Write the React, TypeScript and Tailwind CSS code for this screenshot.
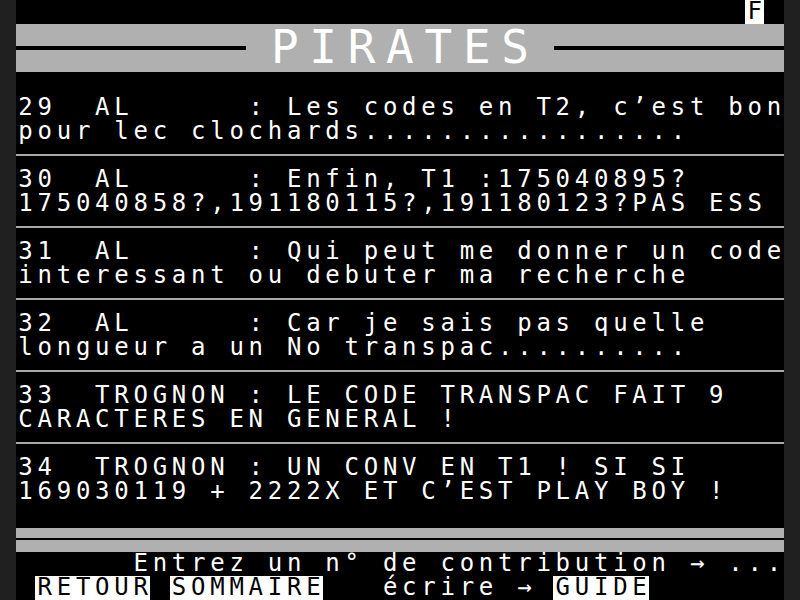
import clsx from 'clsx';

// Minitel page: 40 columns x 25 rows, 19.2 x 24 px per cell
type Seg = { text: string; inv?: boolean };

const messages = [
    { n: '29', who: 'AL', l1: 'Les codes en T2, c’est bon', l2: 'pour lec clochards.................' },
    { n: '30', who: 'AL', l1: 'Enfin, T1 :175040895?', l2: '175040858?,191180115?,191180123?PAS ESS' },
    { n: '31', who: 'AL', l1: 'Qui peut me donner un code', l2: 'interessant ou debuter ma recherche' },
    { n: '32', who: 'AL', l1: 'Car je sais pas quelle', l2: 'longueur a un No transpac..........' },
    { n: '33', who: 'TROGNON', l1: 'LE CODE TRANSPAC FAIT 9', l2: 'CARACTERES EN GENERAL !' },
    { n: '34', who: 'TROGNON', l1: 'UN CONV EN T1 ! SI SI', l2: '169030119 + 2222X ET C’EST PLAY BOY !' },
];

function TextRow({ segs }: { segs: Seg[] }) {
    const cells = segs.flatMap((s) => Array.from(s.text).map((ch) => ({ ch, inv: !!s.inv })));
    while (cells.length < 40) cells.push({ ch: ' ', inv: false });

    return (
        <div className="flex h-6">
            {cells.map((c, i) => (
                <span
                    key={i}
                    className={clsx(
                        'block h-6 w-[19.2px] shrink-0 text-center leading-[22px] whitespace-pre',
                        c.inv ? 'bg-white text-black' : 'text-white'
                    )}
                >
                    {c.ch}
                </span>
            ))}
        </div>
    );
}

function Separator() {
    return (
        <div className="h-6 pt-[10px]">
            <div className="h-[2px] bg-[#a8a8a8]"></div>
        </div>
    );
}

export default function App() {
    return (
        <div className="flex h-[600px] w-[800px] justify-center bg-[#202020] font-['DejaVu_Sans_Mono',monospace] text-[24px]">
            <div className="flex w-[768px] flex-col bg-black">
                {/* ligne de service */}
                <TextRow segs={[{ text: ' '.repeat(38) }, { text: 'F', inv: true }]} />

                {/* titre double taille */}
                <div className="flex h-12 items-center bg-[#b0b0b0]">
                    <div className="h-1 w-[230.4px] bg-black"></div>
                    <div className="w-[19.2px]"></div>
                    {Array.from('PIRATES').map((ch, i) => (
                        <span key={i} className="block h-12 w-[38.4px] text-center text-[46px] leading-[47px] text-white">
                            {ch}
                        </span>
                    ))}
                    <div className="w-[19.2px]"></div>
                    <div className="h-1 w-[230.4px] bg-black"></div>
                </div>

                <div className="h-6"></div>

                {messages.map((m, i) => (
                    <div key={m.n}>
                        {i > 0 && <Separator />}
                        <TextRow segs={[{ text: `${m.n}  ${m.who.padEnd(8)}: ${m.l1}` }]} />
                        <TextRow segs={[{ text: m.l2 }]} />
                    </div>
                ))}

                <div className="h-6"></div>

                {/* bandeau bas */}
                <div className="flex h-6 flex-col">
                    <div className="h-[10px] bg-[#b0b0b0]"></div>
                    <div className="h-[2px]"></div>
                    <div className="h-3 bg-[#b0b0b0]"></div>
                </div>

                <TextRow segs={[{ text: '      Entrez un n° de contribution → ...' }]} />
                <TextRow
                    segs={[
                        { text: ' ' },
                        { text: 'RETOUR', inv: true },
                        { text: ' ' },
                        { text: 'SOMMAIRE', inv: true },
                        { text: '   écrire → ' },
                        { text: 'GUIDE', inv: true },
                    ]}
                />
            </div>
        </div>
    );
}
